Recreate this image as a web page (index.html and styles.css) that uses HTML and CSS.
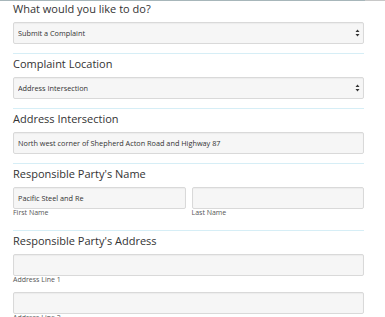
FILE: index.html
```html
<!DOCTYPE html>
<html lang="en">
<head>
    <meta charset="UTF-8">
    <meta name="viewport" content="width=device-width, initial-scale=1.0">
    <title>Complaint Form</title>
    <link rel="stylesheet" href="styles.css">
</head>
<body>
    <div class="top-rule"></div>
    <form class="complaint-form">
        <div class="form-section first">
            <h2 class="section-title">What would you like to do?</h2>
            <div class="select-wrap">
                <select class="field">
                    <option>Submit a Complaint</option>
                </select>
                <svg class="select-arrows" width="5" height="8" viewBox="0 0 5 8"><path d="M2.5 0.5 L4.5 3 L0.5 3 Z M2.5 7.5 L4.5 5 L0.5 5 Z" fill="#333"/></svg>
            </div>
        </div>

        <div class="form-section">
            <h2 class="section-title">Complaint Location</h2>
            <div class="select-wrap">
                <select class="field">
                    <option>Address Intersection</option>
                </select>
                <svg class="select-arrows" width="5" height="8" viewBox="0 0 5 8"><path d="M2.5 0.5 L4.5 3 L0.5 3 Z M2.5 7.5 L4.5 5 L0.5 5 Z" fill="#333"/></svg>
            </div>
        </div>

        <div class="form-section">
            <h2 class="section-title">Address Intersection</h2>
            <input class="field" type="text" value="North west corner of Shepherd Acton Road and Highway 87">
        </div>

        <div class="form-section">
            <h2 class="section-title">Responsible Party's Name</h2>
            <div class="field-row">
                <div class="field-col">
                    <input class="field" type="text" value="Pacific Steel and Re">
                    <label class="field-label">First Name</label>
                </div>
                <div class="field-col">
                    <input class="field" type="text" value="">
                    <label class="field-label">Last Name</label>
                </div>
            </div>
        </div>

        <div class="form-section">
            <h2 class="section-title">Responsible Party's Address</h2>
            <input class="field" type="text" value="">
            <label class="field-label">Address Line 1</label>
            <input class="field spaced" type="text" value="">
            <label class="field-label">Address Line 2</label>
        </div>
    </form>
</body>
</html>
```

FILE: styles.css
```css
body {
    font-family: 'Open Sans', 'Noto Sans', sans-serif;
    margin: 0;
    padding: 0;
    background-color: white;
    color: #333;
    overflow: hidden;
}
.top-rule {
    height: 1px;
    background: linear-gradient(to right, #a7b6ba 0, #a7b6ba 365px, #c8c8c8 365px);
}
.complaint-form {
    width: 351px;
    margin-left: 13px;
}
.form-section {
    border-top: 1px solid #d6eef6;
    padding-top: 1px;
    padding-bottom: 9px;
}
.form-section.first {
    border-top: none;
    padding-top: 0;
    margin-top: -1px;
}
.section-title {
    font-size: 11px;
    font-weight: normal;
    line-height: 18px;
    margin: 0 0 4px;
    color: #333;
}
.field {
    display: block;
    box-sizing: border-box;
    width: 100%;
    height: 22px;
    margin: 0;
    padding: 0 4px;
    border: 1px solid #d9d9d9;
    border-radius: 2px;
    background-color: #f6f6f6;
    box-shadow: inset 0 1px 1px rgba(0, 0, 0, 0.04);
    font-family: 'Open Sans', 'Noto Sans', sans-serif;
    font-size: 7.3px;
    color: #333;
    outline: none;
}
select.field {
    -webkit-appearance: none;
    appearance: none;
}
.select-wrap {
    position: relative;
}
.select-arrows {
    position: absolute;
    right: 4px;
    top: 7px;
    pointer-events: none;
}
.field-row {
    display: flex;
    gap: 6px;
}
.field-col {
    flex: 1;
}
.field-label {
    display: block;
    font-size: 7px;
    line-height: 8px;
    color: #555;
    margin-bottom: 4px;
}
.field.spaced {
    margin-top: 8px;
}
```
